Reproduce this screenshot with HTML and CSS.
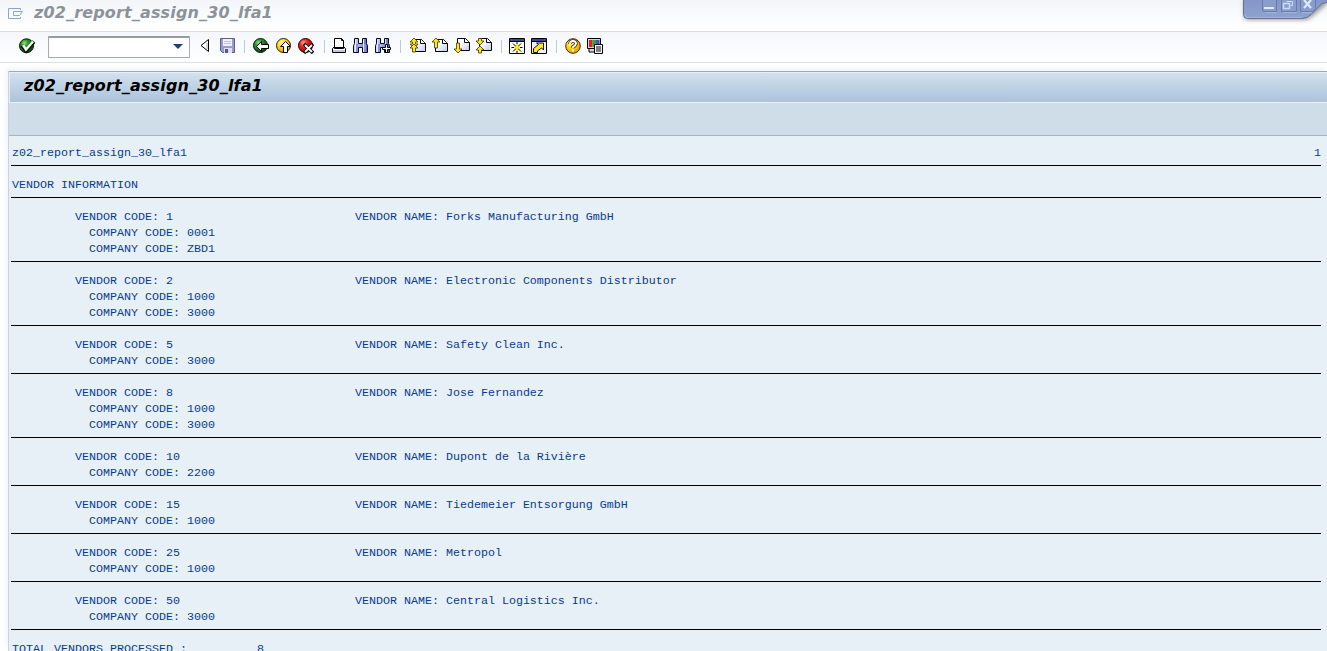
FILE: index.html
```html
<!DOCTYPE html>
<html lang="en">
<head>
<meta charset="utf-8">
<title>z02_report_assign_30_lfa1</title>
<link rel="stylesheet" href="styles.css">
</head>
<body>
<svg class="defs" width="0" height="0">
  <defs>
    <radialGradient id="green" cx=".35" cy=".3" r=".7"><stop offset="0" stop-color="#8be27d"/><stop offset=".35" stop-color="#2f9a28"/><stop offset="1" stop-color="#064a08"/></radialGradient>
    <radialGradient id="yellow" cx=".35" cy=".3" r=".75"><stop offset="0" stop-color="#fff9a0"/><stop offset=".45" stop-color="#ffd21c"/><stop offset="1" stop-color="#e59a00"/></radialGradient>
    <radialGradient id="red" cx=".35" cy=".3" r=".75"><stop offset="0" stop-color="#ff9c90"/><stop offset=".4" stop-color="#e2201c"/><stop offset="1" stop-color="#a80000"/></radialGradient>
    <linearGradient id="lens" x1="0" x2="1" y1="0" y2="0"><stop offset="0" stop-color="#dfe4ff"/><stop offset="1" stop-color="#5964bd"/></linearGradient>
    <linearGradient id="frame" x1="0" x2="0" y1="0" y2="1"><stop offset="0" stop-color="#8396c8"/><stop offset="1" stop-color="#8ea3cf"/></linearGradient>
    <linearGradient id="paper" x1="0" x2="1" y1="0" y2="1"><stop offset=".3" stop-color="#fff"/><stop offset="1" stop-color="#bfc8f4"/></linearGradient>
    <g id="page"><path d="M3.500 1.500h8l4 4v8h-12z" fill="url(#paper)" stroke="#000"/><path d="M10.500 1.500v4h5" fill="#fff" stroke="#000"/></g>
    <g id="binoculars"><path d="M1.500.5h4v5h4v-5h4v5l1 2v7h-5v-5h-4v5h-5v-7l1-2z" fill="url(#lens)" stroke="#05051c"/><path d="M2 6h3v8H2zM10 6h3v8h-3z" fill="#8993dc"/><path d="M2 1h1v13H2zM10 1h1v13h-1z" fill="#e4e8ff"/></g>
  </defs>
</svg>
<header class="titlebar">
  <svg class="menu-icon" width="16" height="13" viewBox="0 0 16 13" fill="none" stroke="#8ba6d0"><path d="M12.500 2V.5H.5v10h12V9M5.500 3.500h9l-3 4h-6z"/></svg>
  <h1 class="window-title">z02_report_assign_30_lfa1</h1>
  <svg class="window-controls" width="90" height="30" viewBox="0 0 90 30">
    <path class="frame-shadow" d="M7 0v15q0 5 5 5h55q5 0 9-4L90 4V0z"/>
    <path d="M6.500-1v15.500q0 4 4 4H65q5 0 9-4l11-11 5-1V-1z" fill="url(#frame)" stroke="#646f91"/>
    <path d="M8 15q0 2.500 3 2.500h54" fill="none" stroke="#a8b6d8"/>
    <g fill="#899dcb" stroke="#6879ab"><path d="M25.500-1v11q0 1.500 2 1.500h12V-1M44.500-1v12.500h15V-1M63.500-1v12.500h12q3-1 3-3V-1"/></g>
    <path d="M28 12.500h12M46 12.500h14M65 12.500h10" stroke="#a6b6da"/>
    <path d="M27 7h10v2H27z" fill="#dce9ff"/>
    <g fill="none" stroke="#c8dcff"><path d="M49.500 1.500h6v4h-2"/><path d="M46.500 3.500h6v5h-6z" stroke-width="1.500"/></g>
    <path d="M67 0l7 8m0-8l-7 8" stroke="#dce9ff" stroke-width="2.200"/>
  </svg>
</header>
<nav class="toolbar">
  <svg class="icon enter" viewBox="0 0 16 16"><circle cx="7.500" cy="7.800" r="7" fill="url(#green)" stroke="#08180a"/><path d="M3 7.500l4 5 8-9" fill="none" stroke="#0b170b" stroke-width="4"/><path d="M4 7l3 4.500 7-8" fill="none" stroke="#fff" stroke-width="2.400"/></svg>
  <div class="command"><span class="arrow"></span></div>
  <div class="group first">
    <svg class="icon" viewBox="0 0 16 16"><path d="M11.500 1.500v12L4 7.500z" fill="#fff" stroke="#000"/><path d="M10 5v6" stroke="#aaa"/></svg>
    <svg class="icon" viewBox="0 0 16 16"><path d="M.5.5h14v14h-12l-2-2z" fill="#9a9bd1" stroke="#5c5d91"/><path d="M3 1h9v7H3z" fill="#f0effb"/><path d="M4 3.500h7M4 5.500h7" stroke="#c2c1df"/><path d="M4 10h8v5H4z" fill="#dedff4"/><path d="M5 11h3v4H5z" fill="#55568d"/></svg>
  </div>
  <div class="group back">
    <svg class="icon" viewBox="0 0 16 16"><circle cx="7.500" cy="7.500" r="7" fill="url(#green)" stroke="#08180a"/><path d="M3.500 8.500l5-5v3h7v4h-7v3z" fill="#fff" stroke="#000"/></svg>
    <svg class="icon" viewBox="0 0 16 16"><circle cx="7.500" cy="7.500" r="7" fill="url(#yellow)" stroke="#332000"/><path d="M9.500 3.500l5 5h-3v6h-4v-6h-3z" fill="#fff" stroke="#000"/></svg>
    <svg class="icon" viewBox="0 0 16 16"><circle cx="7.500" cy="7.500" r="7" fill="url(#red)" stroke="#260000"/><path d="M6 6l9 9m0-9l-9 9" stroke="#000" stroke-width="3.500"/><path d="M7 7l7 7m0-7l-7 7" stroke="#fff" stroke-width="1.800"/></svg>
  </div>
  <div class="group print">
    <svg class="icon" viewBox="0 0 16 16"><path d="M3.500.5h7l2 2v7h-9z" fill="#fff" stroke="#000"/><path d="M10.500.5v2h2" fill="none" stroke="#000"/><path d="M1.500 10.500l2-2v2h9v-2l2 2v4h-13z" fill="#c3c6e8" stroke="#000"/><path d="M2 11.500h12" stroke="#fff"/></svg>
    <svg class="icon" viewBox="0 0 16 16"><use href="#binoculars"/></svg>
    <svg class="icon" viewBox="0 0 16 16"><use href="#binoculars"/><path d="M10.500 6.500h2v3h3v2h-3v3h-2v-3h-3v-2h3z" fill="#fff" stroke="#000"/></svg>
  </div>
  <div class="group pages">
    <svg class="icon" viewBox="0 0 16 16"><use href="#page"/><path d="M4 0l4 4H5.500v2H8L4 10.500 0 6h2.500V4H0z" fill="#ffe81a" stroke="#3a3300" stroke-width=".8"/><path d="M4 6l4 4H5.500v4h-3v-4H0z" fill="#ffe81a" stroke="#3a3300" stroke-width=".8"/></svg>
    <svg class="icon" viewBox="0 0 16 16"><use href="#page"/><path d="M4 0l4 4H5.500v6h-3V4H0z" fill="#ffe81a" stroke="#3a3300" stroke-width=".8"/></svg>
    <svg class="icon" viewBox="0 0 16 16"><use href="#page" y="-1"/><path d="M4 15l4-4H5.500V5h-3v6H0z" fill="#ffe81a" stroke="#3a3300" stroke-width=".8"/></svg>
    <svg class="icon" viewBox="0 0 16 16"><use href="#page" y="-1"/><path d="M4 7l4-4H5.500V.5h-3V3H0zM4 8l4 4H5.500v3h-3v-3H0z" fill="#ffe81a" stroke="#3a3300" stroke-width=".8"/></svg>
  </div>
  <div class="group windows">
    <svg class="icon" viewBox="0 0 16 16"><path d="M.5.5h15v15H.5z" fill="#fffef0" stroke="#000"/><path d="M1 1h14v2H1z" fill="#344b91"/><path d="M1 3.500h14" stroke="#000"/><path d="M8 4v11M2.500 9.500h11M4 5.500l8 8m0-8l-8 8" stroke="#000"/><path d="M8 6v7M5 9.500h6" stroke="#ffe81a" stroke-width="2"/></svg>
    <svg class="icon" viewBox="0 0 16 16"><path d="M.5.5h15v15H.5z" fill="#eef0ff" stroke="#000"/><path d="M1 1h14v2H1z" fill="#344b91"/><path d="M1 3.500h14" stroke="#000"/><path d="M2.500 14.500v-4l5-4-2-1.500h7v7l-2-2-4 3v1.500z" fill="#ffe81a" stroke="#000" stroke-width=".9"/></svg>
  </div>
  <div class="group help">
    <svg class="icon" viewBox="0 0 16 16"><circle cx="8" cy="8" r="7.300" fill="url(#yellow)" stroke="#4a2d00"/><path d="M5 6q0-3 3-3t3 2.500q0 1.500-3 3.500v1" fill="none" stroke="#302000" stroke-width="3.400"/><path d="M5 6q0-3 3-3t3 2.500q0 1.500-3 3.500v1M8 11.500v2" fill="none" stroke="#fff" stroke-width="2"/></svg>
    <svg class="icon" viewBox="0 0 16 16"><path d="M.5.5h13v10H.5zM2 11v3h6v-3" fill="#d8d8d8" stroke="#000"/><path d="M2 2h3.500v7H2z" fill="#e0222a"/><path d="M5.500 2H9v7H5.500z" fill="#1fae30"/><path d="M9 2h3.500v7H9z" fill="#3a54cf"/><path d="M7.500 6.500h8v9h-8z" fill="#fff" stroke="#000"/><path d="M9 9h5m-5 2h5m-5 2h5" stroke="#000"/></svg>
  </div>
</nav>
<main class="report">
  <div class="report-title"><h2>z02_report_assign_30_lfa1</h2></div>
  <div class="app-bar"></div>
  <section class="list">
    <div class="line head"><span>z02_report_assign_30_lfa1</span><span>1</span></div>
    <hr>
    <div class="line">VENDOR INFORMATION</div>
    <hr>
    <div class="line vendor"><span>VENDOR CODE: 1</span><span>VENDOR NAME: Forks Manufacturing GmbH</span></div>
    <div class="line company">COMPANY CODE: 0001</div>
    <div class="line company">COMPANY CODE: ZBD1</div>
    <hr>
    <div class="line vendor"><span>VENDOR CODE: 2</span><span>VENDOR NAME: Electronic Components Distributor</span></div>
    <div class="line company">COMPANY CODE: 1000</div>
    <div class="line company">COMPANY CODE: 3000</div>
    <hr>
    <div class="line vendor"><span>VENDOR CODE: 5</span><span>VENDOR NAME: Safety Clean Inc.</span></div>
    <div class="line company">COMPANY CODE: 3000</div>
    <hr>
    <div class="line vendor"><span>VENDOR CODE: 8</span><span>VENDOR NAME: Jose Fernandez</span></div>
    <div class="line company">COMPANY CODE: 1000</div>
    <div class="line company">COMPANY CODE: 3000</div>
    <hr>
    <div class="line vendor"><span>VENDOR CODE: 10</span><span>VENDOR NAME: Dupont de la Rivière</span></div>
    <div class="line company">COMPANY CODE: 2200</div>
    <hr>
    <div class="line vendor"><span>VENDOR CODE: 15</span><span>VENDOR NAME: Tiedemeier Entsorgung GmbH</span></div>
    <div class="line company">COMPANY CODE: 1000</div>
    <hr>
    <div class="line vendor"><span>VENDOR CODE: 25</span><span>VENDOR NAME: Metropol</span></div>
    <div class="line company">COMPANY CODE: 1000</div>
    <hr>
    <div class="line vendor"><span>VENDOR CODE: 50</span><span>VENDOR NAME: Central Logistics Inc.</span></div>
    <div class="line company">COMPANY CODE: 3000</div>
    <hr>
    <div class="line total"><span>TOTAL VENDORS PROCESSED :</span><span>8</span></div>
  </section>
</main>
</body>
</html>
```

FILE: styles.css
```css
* { box-sizing: border-box; }
body { margin: 0; height: 651px; overflow: hidden; display: flex; flex-direction: column; background: #fff; }
.defs { position: absolute; }
svg { display: block; flex: none; }
h1, h2 { margin: 0; font: italic bold 16px/20px "DejaVu Sans", sans-serif; white-space: nowrap; letter-spacing: 0.15px; }

.titlebar { flex: none; height: 32px; display: flex; align-items: flex-start; padding-left: 8px; background: linear-gradient(#f3f5fa, #fff 26px); border-bottom: 1px solid #dcdfea; }
.menu-icon { margin: 8px 10px 0 0; }
.window-title { color: #8d9299; margin-top: 3px; }
.window-controls { margin-left: auto; }
.frame-shadow { fill: #777; filter: blur(2px); opacity: .7; }

.toolbar { flex: none; height: 31px; display: flex; align-items: flex-start; padding-left: 19px; background: linear-gradient(#f5f7fc, #fff); border-bottom: 1px solid #dcdfe8; }
.icon { width: 16px; height: 16px; }
.toolbar > .icon { margin-top: 6px; }
.command { width: 142px; height: 22px; margin: 4px 0 0 13px; background: #fff; border: 1px solid #a7abae; border-top: 2px solid #959da1; border-radius: 1px; display: flex; justify-content: flex-end; padding: 6px 6px 0 0; }
.arrow { border: 5px solid transparent; border-top: 5px solid #203f75; border-bottom: 0; height: 0; }
.group { display: flex; gap: 6px; padding: 6px 0 0 8px; margin-left: 8px; background: linear-gradient(#b7cbe1, #b7cbe1) 0 8px / 1px 13px no-repeat; }
.group.first { gap: 7px; background: none; padding-left: 0; margin-left: 7px; }
.group.back { padding-left: 9px; gap: 7px; }
.group.back .icon:last-child { margin-left: -1px; }
.group.print { padding-left: 7px; margin-left: 10px; }
.group.pages { margin-left: 9px; padding-left: 10px; }
.group.windows { margin-left: 9px; }
.group.help { margin-left: 9px; padding-left: 9px; }

.report { flex: 1; min-height: 0; margin-top: 8px; margin-left: 8px; background: #e8f0f7; border-left: 1px solid #c9d4df; box-shadow: -2px -3px 5px #f1f3f8; }
.report-title { height: 31px; border-top: 1px solid #9aaab9; padding: 4px 0 0 15px; background: linear-gradient(#d3e2ed, #abc3dc); box-shadow: inset 1px 1px #e6eff5; }
.report-title h2 { color: #000; }
.app-bar { height: 34px; background: #cfdde8; border-top: 1px solid #eaf2f6; border-bottom: 1px solid #a4b4c8; }
.list { padding: 9px 6px 0 2px; font: 11.667px/16px "Courier New", "Liberation Mono", monospace; color: #073b8c; }
.line { height: 16px; padding-left: 1px; white-space: pre; }
.head { display: flex; justify-content: space-between; }
.vendor { padding-left: 64px; display: grid; grid-template-columns: 280px 1fr; }
.company { padding-left: 78px; }
.total { display: flex; gap: 70px; }
hr { height: 1px; margin: 4px 0 11px; border: 0; background: #000; }
```
